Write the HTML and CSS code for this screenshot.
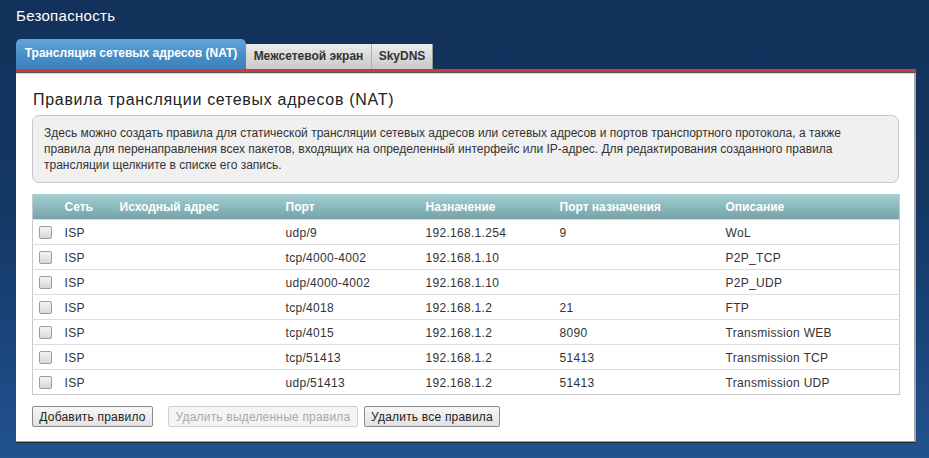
FILE: index.html
```html
<!DOCTYPE html>
<html lang="ru">
<head>
<meta charset="utf-8">
<title>Безопасность</title>
<link rel="stylesheet" href="styles.css">
</head>
<body>
<div class="page">
  <h1 class="title">Безопасность</h1>
  <div class="tabs">
    <div class="tab tab-active">Трансляция сетевых адресов (NAT)</div>
    <div class="tab tab-fw">Межсетевой экран</div>
    <div class="tab tab-dns">SkyDNS</div>
  </div>
  <div class="redbar"></div>
  <div class="panel">
    <h2 class="heading">Правила трансляции сетевых адресов (NAT)</h2>
    <div class="info">Здесь можно создать правила для статической трансляции сетевых адресов или сетевых адресов и портов транспортного протокола, а также правила для перенаправления всех пакетов, входящих на определенный интерфейс или IP-адрес. Для редактирования созданного правила трансляции щелкните в списке его запись.</div>
    <table class="rules">
      <colgroup>
        <col class="c-check"><col class="c-net"><col class="c-src"><col class="c-port"><col class="c-dst"><col class="c-dport"><col class="c-desc">
      </colgroup>
      <thead>
        <tr><th></th><th>Сеть</th><th>Исходный адрес</th><th>Порт</th><th>Назначение</th><th>Порт назначения</th><th>Описание</th></tr>
      </thead>
      <tbody>
        <tr><td><span class="cb"></span></td><td>ISP</td><td></td><td>udp/9</td><td>192.168.1.254</td><td>9</td><td>WoL</td></tr>
        <tr><td><span class="cb"></span></td><td>ISP</td><td></td><td>tcp/4000-4002</td><td>192.168.1.10</td><td></td><td>P2P_TCP</td></tr>
        <tr><td><span class="cb"></span></td><td>ISP</td><td></td><td>udp/4000-4002</td><td>192.168.1.10</td><td></td><td>P2P_UDP</td></tr>
        <tr><td><span class="cb"></span></td><td>ISP</td><td></td><td>tcp/4018</td><td>192.168.1.2</td><td>21</td><td>FTP</td></tr>
        <tr><td><span class="cb"></span></td><td>ISP</td><td></td><td>tcp/4015</td><td>192.168.1.2</td><td>8090</td><td>Transmission WEB</td></tr>
        <tr><td><span class="cb"></span></td><td>ISP</td><td></td><td>tcp/51413</td><td>192.168.1.2</td><td>51413</td><td>Transmission TCP</td></tr>
        <tr><td><span class="cb"></span></td><td>ISP</td><td></td><td>udp/51413</td><td>192.168.1.2</td><td>51413</td><td>Transmission UDP</td></tr>
      </tbody>
    </table>
    <div class="buttons">
      <button class="btn btn-add">Добавить правило</button>
      <button class="btn btn-disabled" disabled>Удалить выделенные правила</button>
      <button class="btn btn-all">Удалить все правила</button>
    </div>
  </div>
</div>
</body>
</html>
```
FILE: styles.css
```css
html, body {
  margin: 0;
  padding: 0;
}
body {
  width: 929px;
  height: 458px;
  overflow: hidden;
  background: linear-gradient(#12315a 0%, #143864 45%, #1b4880 80%, #22538f 100%);
  font-family: "Liberation Sans", Arial, sans-serif;
  font-size: 12px;
  color: #333;
}
.page {
  padding: 0 13px 0 16px;
}
.title {
  margin: 0;
  padding-top: 7px;
  height: 39px;
  box-sizing: border-box;
  font-size: 15px;
  font-weight: normal;
  color: #fff;
  line-height: 18px;
  letter-spacing: 0.3px;
}
.tabs {
  display: flex;
  align-items: flex-end;
  height: 30px;
}
.tab {
  height: 25px;
  box-sizing: border-box;
  line-height: 25px;
  font-weight: bold;
  font-size: 12px;
  color: #333;
  text-align: center;
  white-space: nowrap;
  background: linear-gradient(#ececec, #d6d6d6 60%, #cbcbcb);
  border-right: 1px solid #b0b0b0;
}
.tab-active {
  width: 230px;
  height: 30px;
  line-height: 29px;
  color: #fff;
  border-radius: 5px 5px 0 0;
  border-right: none;
  background: linear-gradient(#62a6d8, #4b92ca 45%, #3a80bb);
}
.tab-fw { width: 126px; }
.tab-dns { width: 61px; border-right-color: #999; }
.redbar {
  height: 3px;
  width: 900px;
  background: #d23838;
  border-bottom: 1px solid #555;
}
.panel {
  width: 900px;
  box-sizing: border-box;
  background: #fff;
  padding: 16px 15px 14px 16px;
  border-top: 1px solid #d4d4d4;
  border-right: 2px solid #a5a5a5;
  border-bottom: 1px solid #9a9a9a;
  box-shadow: 0 1px 0 #2a2a2a;
}
.heading {
  margin: 0 0 5px 1px;
  font-size: 16px;
  font-weight: normal;
  line-height: 20px;
  color: #222;
  letter-spacing: 0.7px;
}
.info {
  background: #f0f0f0;
  border: 1px solid #c6c6c6;
  border-radius: 7px;
  padding: 9px 20px 9px 11px;
  line-height: 16px;
  font-size: 12px;
  color: #333;
  letter-spacing: 0;
}
.rules {
  margin-top: 11px;
  width: 867px;
  table-layout: fixed;
  border-collapse: collapse;
  border: 1px solid #c8c8c8;
  border-top: none;
}
.c-check { width: 26px; }
.c-net { width: 55px; }
.c-src { width: 166px; }
.c-port { width: 140px; }
.c-dst { width: 134px; }
.c-dport { width: 166px; }
.c-desc { width: 180px; }
.rules th {
  height: 24px;
  padding: 1px 6px 0;
  text-align: left;
  font-weight: bold;
  color: #fff;
  background: linear-gradient(#a5cfd3, #8fbcc1 45%, #76a2a7);
}
.rules td {
  height: 23px;
  padding: 1px 6px 0;
  border-top: 1px solid #dcdcdc;
  color: #333;
  letter-spacing: 0.3px;
  white-space: nowrap;
}
.rules td:first-child {
  padding: 0 0 0 6px;
}
.cb {
  display: block;
  width: 11px;
  height: 11px;
  border: 1px solid #9c9c9c;
  border-radius: 2px;
  background: linear-gradient(#f4f4f4, #d8d8d8);
}
.buttons {
  display: flex;
  margin-top: 11px;
}
.btn {
  height: 21px;
  box-sizing: border-box;
  padding: 0;
  font-family: "Liberation Sans", Arial, sans-serif;
  font-size: 12px;
  color: #222;
  letter-spacing: 0.2px;
  text-align: center;
  white-space: nowrap;
  background: linear-gradient(#f7f7f7, #e2e2e2);
  border: 1px solid #8a8a8a;
  border-radius: 2px;
}
.btn-add { width: 121px; margin-right: 15px; }
.btn-disabled {
  width: 190px;
  margin-right: 6px;
  color: #a8a8a8;
  border-color: #cfcfcf;
  background: #f4f4f4;
}
.btn-all { width: 136px; }
```
